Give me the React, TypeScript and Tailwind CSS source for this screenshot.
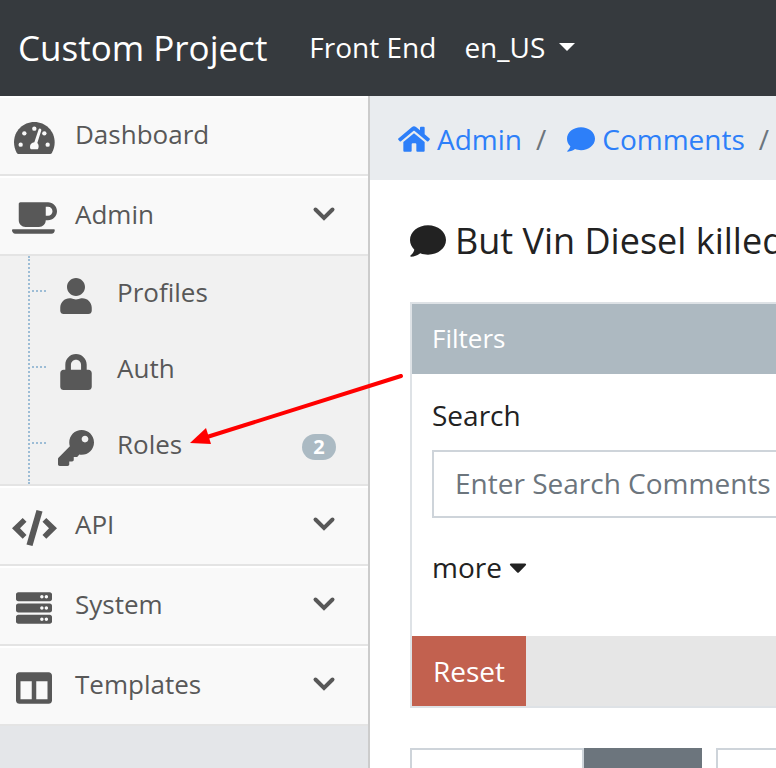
import type { ReactNode } from "react";
import {
  FaCoffee,
  FaUser,
  FaLock,
  FaKey,
  FaServer,
  FaColumns,
  FaCaretDown,
} from "react-icons/fa";

function GaugeIcon() {
  return (
    <svg viewBox="0 0 123 96" className="h-8 w-[41px]" fill="currentColor" aria-hidden="true">
      <path d="M61 0C27 0 0 27 0 61c0 11 3 22 8 31 2 3 4 4 7 4h92c3 0 5-1 7-4 5-9 8-20 8-31C122 27 95 0 61 0z" />
      <g fill="#f9f9f9">
        <circle cx="61" cy="20" r="6.500" />
        <circle cx="31" cy="34" r="6.500" />
        <circle cx="91" cy="34" r="6.500" />
        <circle cx="20" cy="68" r="6.500" />
        <circle cx="101" cy="68" r="6.500" />
        <path d="M74 22c1-5 9-3 8 3L70 63c4 4 5 10 3 16-1 3-2 3-4 3H53c-3 0-5-2-5-7 0-8 5-13 13-14z" />
      </g>
    </svg>
  );
}

function CodeIcon() {
  return (
    <svg viewBox="0 0 45 36" className="h-9 w-[45px]" fill="currentColor" aria-hidden="true">
      <path d="M0 18.300 10.700 8 14.500 11.700 8 18.300 14.500 25 10.700 28.800z" />
      <path d="M45 18.300 34.300 8 30.500 11.700 37 18.300 30.500 25 34.300 28.800z" />
      <path d="M24.500 0 30.500 1.500 20.500 36 14.500 34.500z" />
    </svg>
  );
}

function HomeIcon() {
  return (
    <svg viewBox="0 0 96 78" className="h-[26px] w-8" fill="currentColor" aria-hidden="true">
      <path d="M2 37 42 3c4-3 8-3 12 0l12 10V5c0-2 1-3 3-3h8c2 0 3 1 3 3v20l14 12c2 1 2 3 1 4l-4 5c-1 1-3 1-4 0L50 15c-1-1-3-1-4 0L9 46c-1 1-3 1-4 0l-4-5c-1-1-1-3 1-4z" />
      <path d="M48 22 80 48v26c0 2-1 3-3 3H58c-2 0-3-1-3-3V55c0-2-1-3-3-3h-8c-2 0-3 1-3 3v19c0 2-1 3-3 3H19c-2 0-3-1-3-3V48z" />
    </svg>
  );
}

function CommentIcon({ className }: { className: string }) {
  return (
    <svg viewBox="0 0 108 94" className={className} fill="currentColor" aria-hidden="true">
      <path d="M54 0C24 0 0 20 0 44c0 12 5 21 13 29-2 7-6 13-11 17-2 2-1 4 1 4 12 0 21-5 28-10 7 3 15 4 23 4 30 0 54-20 54-44S84 0 54 0z" />
    </svg>
  );
}

function Chevron() {
  return (
    <svg viewBox="0 0 24 16" className="h-4 w-6" fill="none" stroke="currentColor" strokeWidth="4" strokeLinecap="round" aria-hidden="true">
      <path d="M3.500 3.500 12 12l8.500-8.500" />
    </svg>
  );
}

function MenuItem({ icon, label, expandable = true }: { icon: ReactNode; label: string; expandable?: boolean }) {
  return (
    <a
      href="#"
      className="flex h-20 items-start border-t-2 border-b-2 border-t-white border-b-[#e4e4e4] bg-[#f9f9f9] pr-8"
    >
      <span className="mt-[18px] flex h-11 w-[68px] items-center justify-center">{icon}</span>
      <span className="mt-4 ml-[7px] grow leading-10">{label}</span>
      {expandable && (
        <span className="mt-7">
          <Chevron />
        </span>
      )}
    </a>
  );
}

function SubItem({ icon, label, badge }: { icon: ReactNode; label: string; badge?: string }) {
  return (
    <li className="flex h-19 items-start pr-8">
      <span className="mt-[34px] ml-0.5 w-3.5 border-t-2 border-dotted border-[#9dbdd6]" />
      <a href="#" className="flex grow items-start">
        <span className="mt-[22px] flex h-9 w-15 items-center justify-center">{icon}</span>
        <span className="mt-4 ml-[11px] grow leading-10">{label}</span>
        {badge && (
          <span className="mt-[26px] h-[26px] w-[34px] rounded-full bg-[#abbac3] text-center text-xl leading-[26px] font-bold text-white">
            {badge}
          </span>
        )}
      </a>
    </li>
  );
}

function Sidebar() {
  return (
    <nav className="w-[370px] shrink-0 border-r-2 border-[#ccc] bg-[#e4e6e9] text-[26px] text-[#585858]">
      <MenuItem icon={<GaugeIcon />} label="Dashboard" expandable={false} />
      <MenuItem icon={<FaCoffee className="h-9 w-[45px]" />} label="Admin" />
      <div className="border-b-2 border-[#e4e4e4] bg-[#f1f1f1] pl-7">
        <ul className="border-l-2 border-dotted border-[#9dbdd6]">
          <SubItem icon={<FaUser size={36} />} label="Profiles" />
          <SubItem icon={<FaLock size={36} />} label="Auth" />
          <SubItem icon={<FaKey size={36} />} label="Roles" badge="2" />
        </ul>
      </div>
      <MenuItem icon={<CodeIcon />} label="API" />
      <MenuItem icon={<FaServer size={36} />} label="System" />
      <MenuItem icon={<FaColumns size={36} />} label="Templates" />
    </nav>
  );
}

function Breadcrumb() {
  return (
    <nav aria-label="Breadcrumb" className="flex h-[84px] items-center bg-[#e9ecef] pt-0.5 pl-7 whitespace-nowrap">
      <a href="#" className="flex items-center gap-[7px] text-[#2d7ff9]">
        <HomeIcon />
        Admin
      </a>
      <span className="pr-[21px] pl-3.5 text-[#6c757d]">/</span>
      <a href="#" className="flex items-center gap-[7px] text-[#2d7ff9]">
        <CommentIcon className="h-[25px] w-7" />
        Comments
      </a>
      <span className="px-3.5 text-[#6c757d]">/</span>
    </nav>
  );
}

function Filters() {
  return (
    <form className="border-2 border-[#dee2e6]">
      <h2 className="h-[70px] bg-[#adb9c1] px-5 text-[26px] leading-[68px] font-medium text-white">Filters</h2>
      <div className="h-[262px] px-5 pt-5">
        <label htmlFor="search" className="block leading-[42px]">
          Search
        </label>
        <input
          id="search"
          type="text"
          placeholder="Enter Search Comments"
          className="mt-3.5 block h-17 w-full border-2 border-[#ced4da] bg-white px-[21px] pb-0.5 placeholder:text-[#6c757d]"
        />
        <button type="button" className="mt-7 flex items-center leading-[42px]">
          more
          <FaCaretDown size={28} className="ml-0.5" />
        </button>
      </div>
      <div className="flex h-[70px] bg-[#e6e6e6]">
        <button type="reset" className="w-[114px] bg-[#c2614f] font-medium text-white">
          Reset
        </button>
      </div>
    </form>
  );
}

export default function App() {
  return (
    <div className="relative flex h-screen flex-col overflow-hidden bg-white font-['Open_Sans','Noto_Sans',sans-serif] text-[28px] text-[#222]">
      <header className="flex h-24 shrink-0 items-center bg-[#363a3e] pl-[18px] whitespace-nowrap text-white">
        <a href="#" className="text-[35px]">
          Custom Project
        </a>
        <div className="ml-[42px] flex gap-7 pb-0.5 font-medium">
          <a href="#">Front End</a>
          <button type="button" className="flex items-center gap-3.5">
            en_US
            <svg viewBox="0 0 16 8" className="h-2 w-4" fill="currentColor" aria-hidden="true">
              <path d="M0 0h16L8 8z" />
            </svg>
          </button>
        </div>
      </header>
      <div className="flex grow">
        <Sidebar />
        <main className="min-w-[640px] grow">
          <Breadcrumb />
          <div className="px-10">
            <h1 className="flex h-[122px] items-center gap-[9px] text-4xl whitespace-nowrap">
              <CommentIcon className="h-8 w-9 shrink-0" />
              But Vin Diesel killed
            </h1>
            <Filters />
            <div className="mt-10 flex">
              <input type="text" aria-label="Page" className="h-17 w-[174px] shrink-0 border-2 border-[#ced4da]" />
              <button type="button" aria-label="Go" className="w-[118px] shrink-0 bg-[#6c757d]" />
              <input type="text" aria-label="Limit" className="ml-3.5 h-17 w-0 grow border-2 border-[#ced4da]" />
            </div>
          </div>
        </main>
      </div>
      <svg viewBox="0 0 216 72" className="pointer-events-none absolute top-[374px] left-[189px] h-[72px] w-[216px]" aria-hidden="true">
        <path d="M18 63 212 2" stroke="#f00" strokeWidth="4" strokeLinecap="round" />
        <path d="M1 69 17 54 22 70z" fill="#f00" />
      </svg>
    </div>
  );
}
